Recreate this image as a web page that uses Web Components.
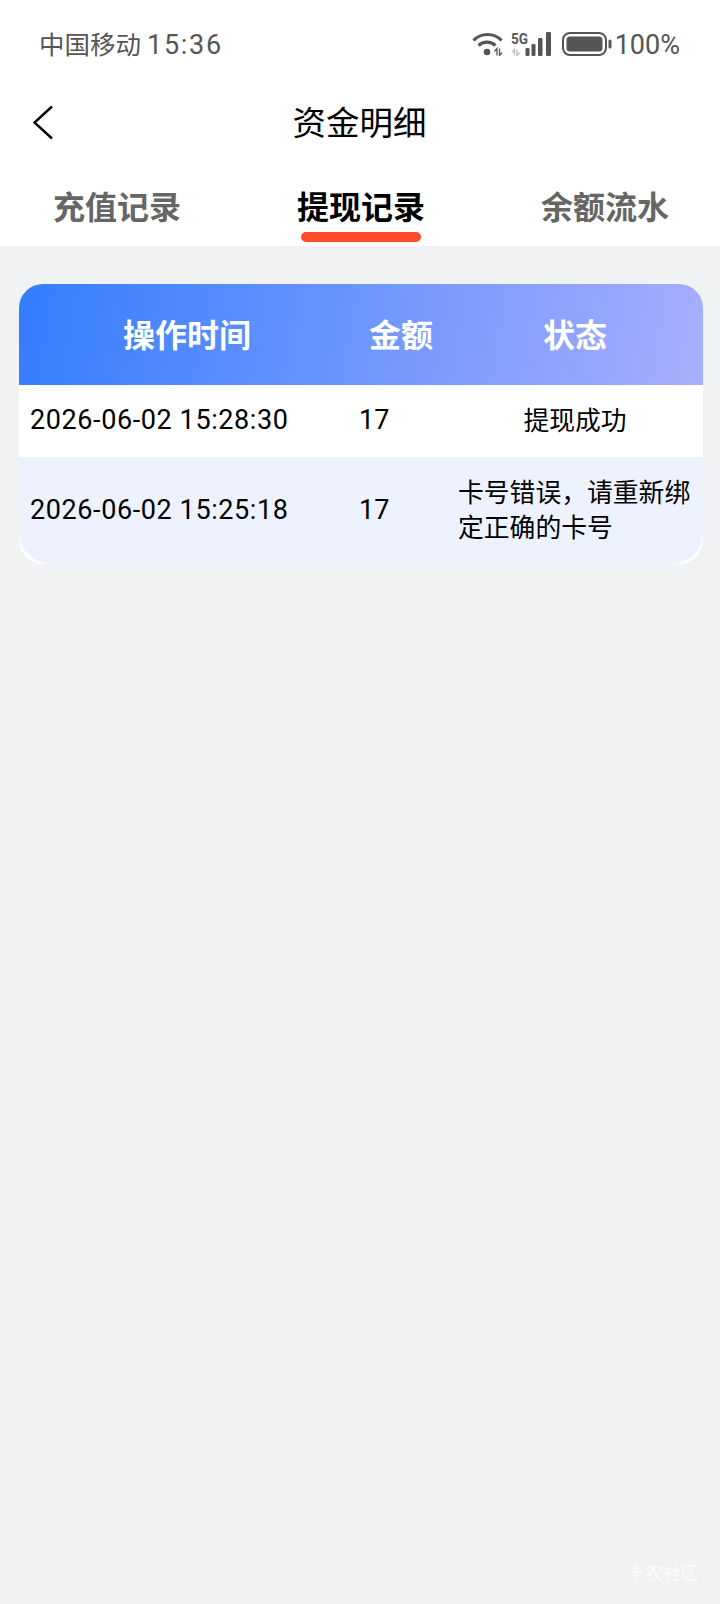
<!DOCTYPE html>
<html lang="zh">
<head>
<meta charset="utf-8">
<title>资金明细</title>
<style>
  html, body { margin: 0; height: 100%; }
  body {
    width: 720px; height: 1604px; overflow: hidden;
    display: flex; flex-direction: column;
    background: #f0f2f4;
    font-family: Roboto, "Noto Sans CJK SC", sans-serif;
  }
</style>
</head>
<body>
<status-bar></status-bar>
<nav-header title="资金明细"></nav-header>
<tab-bar>
  <tab-item>充值记录</tab-item>
  <tab-item active>提现记录</tab-item>
  <tab-item>余额流水</tab-item>
</tab-bar>
<record-table>
  <record-row time="2026-06-02 15:28:30" amount="17" center>提现成功</record-row>
  <record-row time="2026-06-02 15:25:18" amount="17" tinted>卡号错误，请重新绑定正确的卡号</record-row>
</record-table>
<page-mark>卡农社区</page-mark>

<script>
class StatusBar extends HTMLElement {
  constructor() {
    super();
    this.attachShadow({ mode: 'open' });
    this.shadowRoot.innerHTML = `
      <style>
        :host {
          display: flex; align-items: center; justify-content: space-between;
          height: 88px; padding: 0 40px 0 39px; background: #fff;
          color: #555; font-size: 27px; flex: none;
        }
        .left { display: flex; gap: 6px; align-items: center; }
        .cn { font-size: 25.5px; padding-bottom: 3px; }
        .time { letter-spacing: 1.700px; padding-top: 2px; }
        .right { display: flex; align-items: center; }
        svg { display: block; flex: none; }
        .pct { margin-left: 2px; padding-top: 1px; }
      </style>
      <div class="left"><span class="cn">中国移动</span><span class="time">15:36</span></div>
      <div class="right">
        <svg width="31" height="24" viewBox="0 0 31 24" fill="none" stroke="#555" stroke-width="3.200">
          <path d="M1.500 8.500C9 .5 22 .5 29.500 8.500"/>
          <path d="M6.500 13.500C11 9 19 9 23.500 13.500"/>
          <circle cx="15" cy="20" r="3.300" fill="#555" stroke="none"/>
          <path d="M22.500 19.500L25 16.500V23.500M27.500 16.500V23.500L30 20.500" stroke-width="1.300"/>
        </svg>
        <svg style="margin-left:8px" width="41" height="24" viewBox="0 0 41 24">
          <text x="0" y="11.500" font-size="14" font-weight="700" fill="#555" font-family="Roboto" textLength="17" lengthAdjust="spacingAndGlyphs">5G</text>
          <path d="M1 20.500L3.500 17.500V23.500M6 17.500V23.500L8.500 20.500" fill="none" stroke="#bbb" stroke-width="1.300"/>
          <rect x="14.500" y="16" width="4" height="8" rx="1.200" fill="#555"/>
          <rect x="20.500" y="12" width="4" height="12" rx="1.200" fill="#555"/>
          <rect x="27" y="6" width="4.500" height="18" rx="1.200" fill="#555"/>
          <rect x="35" y="0" width="5" height="24" rx="1.200" fill="#555"/>
        </svg>
        <svg style="margin-left:10px" width="51" height="24" viewBox="0 0 51 24">
          <rect x="1" y="1" width="43" height="22" rx="7" fill="none" stroke="#555" stroke-width="2"/>
          <rect x="4.500" y="4.500" width="36" height="15" rx="3.500" fill="#555"/>
          <rect x="46.500" y="7.500" width="3" height="9" rx="1.500" fill="#555"/>
        </svg>
        <span class="pct">100%</span>
      </div>`;
  }
}

class NavHeader extends HTMLElement {
  constructor() {
    super();
    this.attachShadow({ mode: 'open' });
    this.shadowRoot.innerHTML = `
      <style>
        :host {
          display: grid; grid-template-columns: 1fr auto 1fr; align-items: center;
          height: 68px; padding: 0 33px 0 32px; background: #fff; color: #000; flex: none;
        }
        svg { display: block; }
        .title { font-size: 33.500px; padding-bottom: 4px; }
      </style>
      <svg width="22" height="38" viewBox="0 0 22 38" fill="none" stroke="#000" stroke-width="2.400">
        <path d="M20 3.500L2.500 19.500L20 35.500"/>
      </svg>
      <div class="title"></div><div></div>`;
    this.shadowRoot.querySelector('.title').textContent = this.getAttribute('title');
  }
}

class TabBar extends HTMLElement {
  constructor() {
    super();
    this.attachShadow({ mode: 'open' });
    this.shadowRoot.innerHTML = `
      <style>
        :host {
          display: flex; justify-content: space-between;
          height: 90px; padding: 0 51px 0 53px; background: #fff; flex: none;
        }
      </style>
      <slot></slot>`;
  }
}

class TabItem extends HTMLElement {
  constructor() {
    super();
    this.attachShadow({ mode: 'open' });
    this.shadowRoot.innerHTML = `
      <style>
        :host {
          display: flex; flex-direction: column; align-items: center;
          color: #666; font-size: 32px; font-weight: 700;
        }
        :host([active]) { color: #000; }
        .label { height: 55px; padding-top: 21px; display: flex; align-items: center; }
        .bar { width: 120px; height: 10px; border-radius: 5px; background: transparent; }
        :host([active]) .bar { background: #ff4d2a; }
      </style>
      <div class="label"><slot></slot></div>
      <div class="bar"></div>`;
  }
}

class RecordTable extends HTMLElement {
  constructor() {
    super();
    this.attachShadow({ mode: 'open' });
    this.shadowRoot.innerHTML = `
      <style>
        :host {
          display: block; margin: 38px 17px 0 19px; background: #fff;
          border-radius: 24px; overflow: hidden; flex: none;
        }
        .head {
          display: grid; grid-template-columns: 336px 92px 256px; height: 98px; padding-bottom: 3px; align-items: center;
          background: linear-gradient(100deg, #337dff, #a8aefc);
          color: #fff; font-size: 32px; font-weight: 700; text-align: center;
        }
      </style>
      <div class="head"><div>操作时间</div><div>金额</div><div>状态</div></div>
      <slot></slot>`;
  }
}

class RecordRow extends HTMLElement {
  constructor() {
    super();
    this.attachShadow({ mode: 'open' });
    this.shadowRoot.innerHTML = `
      <style>
        :host {
          display: grid; grid-template-columns: 336px 92px 256px; align-items: center;
          height: 72px; color: #000; font-size: 27px; background: #fff;
        }
        :host([tinted]) { height: 107px; background: #eef2fe; border-radius: 0 0 32px 32px; }
        .time { padding: 0 0 2px 11px; letter-spacing: .6px; }
        .amount { padding: 0 0 2px 4px; }
        .state { padding: 0 11px; font-size: 25.800px; line-height: 35px; }
        :host([center]) .state { text-align: center; }
      </style>
      <div class="time"></div><div class="amount"></div><div class="state"><slot></slot></div>`;
    this.shadowRoot.querySelector('.time').textContent = this.getAttribute('time');
    this.shadowRoot.querySelector('.amount').textContent = this.getAttribute('amount');
  }
}

class PageMark extends HTMLElement {
  constructor() {
    super();
    this.attachShadow({ mode: 'open' });
    this.shadowRoot.innerHTML = `
      <style>
        :host {
          display: block; margin-top: auto; padding: 0 21px 19px 0;
          text-align: right; color: #fff; font-size: 18px; line-height: 22px; opacity: .75;
        }
      </style>
      <slot></slot>`;
  }
}

customElements.define('status-bar', StatusBar);
customElements.define('nav-header', NavHeader);
customElements.define('tab-bar', TabBar);
customElements.define('tab-item', TabItem);
customElements.define('record-table', RecordTable);
customElements.define('record-row', RecordRow);
customElements.define('page-mark', PageMark);
</script>
</body>
</html>
